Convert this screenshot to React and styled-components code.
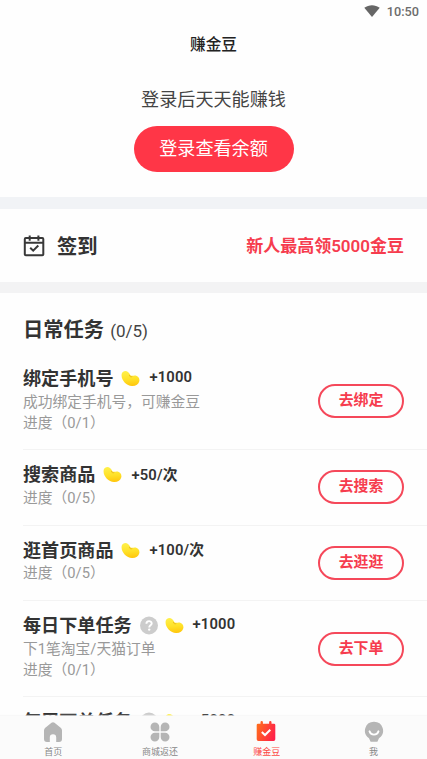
import React from 'react';
import styled, { createGlobalStyle } from 'styled-components';

const Global = createGlobalStyle`
  * { box-sizing: border-box; }
  body { margin: 0; background: #fff; overflow: hidden; }
`;

const Screen = styled.div`
  height: 759px;
  display: flex;
  flex-direction: column;
  overflow: hidden;
  background: #fefefe;
  color: #333;
  font-family: Roboto, 'Noto Sans CJK SC', sans-serif;
  white-space: nowrap;
`;

const StatusBar = styled.div`
  height: 22px;
  flex: none;
  display: flex;
  align-items: center;
  justify-content: flex-end;
  gap: 7px;
  padding: 0 8px 0 0;
  font-size: 12.7px;
  font-weight: 500;
  color: #6c6c6c;
`;

const Header = styled.header`
  height: 44px;
  flex: none;
  text-align: center;
  font-size: 15.7px;
  line-height: 45px;
  font-weight: 500;
  color: #222;
`;

const Content = styled.main`
  flex: 1;
  min-height: 0;
  overflow: hidden;
`;

const LoginPanel = styled.section`
  height: 131px;
  display: flex;
  flex-direction: column;
  align-items: center;
  padding-top: 19px;
`;

const Slogan = styled.div`
  font-size: 18.1px;
  line-height: 30px;
  color: #444;
`;

const LoginButton = styled.button`
  width: 160px;
  height: 46px;
  margin-top: 11px;
  padding: 0 0 4px;
  border: 0;
  border-radius: 23px;
  background: #ff3647;
  color: #fff;
  font: 400 18.1px Roboto, 'Noto Sans CJK SC', sans-serif;
`;

const Band = styled.div`
  height: ${(p) => p.$height}px;
  background: ${(p) => p.$color};
`;

const SignIn = styled.section`
  height: 73px;
  display: flex;
  align-items: center;
  padding: 0 23px;
`;

const SignInLabel = styled.div`
  margin: 0 0 2px 12px;
  font-size: 20.3px;
  font-weight: 700;
`;

const Promo = styled.div`
  margin: 0 0 3px auto;
  font-size: 17px;
  font-weight: 600;
  color: #f63c4e;
`;

const TaskHeading = styled.h2`
  height: 60px;
  margin: 0;
  padding: 21px 23px 0;
  font-size: 20.3px;
  line-height: 33px;
  font-weight: 700;
`;

const Count = styled.span`
  margin-left: 6px;
  font-size: 17px;
  font-weight: 400;
  color: #444;
`;

const TaskRow = styled.article`
  height: ${(p) => p.$height}px;
  margin-left: 23px;
  padding-right: 23px;
  display: flex;
  align-items: center;
  justify-content: space-between;
  border-bottom: 1px solid #f3f3f3;
`;

const TaskInfo = styled.div`
  align-self: flex-start;
  padding-top: ${(p) => (p.$tall ? 11 : 10)}px;
`;

const TaskTitle = styled.div`
  height: 26px;
  margin-bottom: 1.500px;
  display: flex;
  align-items: center;
  font-size: 18.1px;
  font-weight: 700;
`;

const Reward = styled.span`
  margin-left: 9px;
  font-size: 14.8px;
  font-weight: 600;
  letter-spacing: 0.15px;
`;

const TaskText = styled.div`
  font-size: 14.75px;
  line-height: 21px;
  color: #999;
`;

const TaskButton = styled.button`
  width: 86px;
  height: 34px;
  padding: 0 0 5px;
  border: 2px solid #f5485a;
  border-radius: 17px;
  background: transparent;
  color: #f63c4e;
  font: 700 14.9px Roboto, 'Noto Sans CJK SC', sans-serif;
`;

const BeanIcon = styled.svg`
  flex: none;
  margin: 3px 0 0 8px;
`;

const HelpIcon = styled.svg`
  flex: none;
  margin: 2px 0 0 8px;
  & + ${BeanIcon} { margin-left: 6px; }
`;

const TabBar = styled.nav`
  height: 43px;
  flex: none;
  display: grid;
  grid-template-columns: repeat(4, 1fr);
  background: #fbfbfb;
  box-shadow: 0 -1px 1px #f5f5f5aa;
`;

const Tab = styled.div`
  display: flex;
  flex-direction: column;
  align-items: center;
  padding-top: 5px;
  font-size: 9px;
  line-height: 14px;
  color: ${(p) => (p.$active ? '#fb4a45' : '#888')};
  svg { display: block; margin-bottom: 2px; }
`;

function Bean() {
  return (
    <BeanIcon width="19" height="17" viewBox="0 0 19 17">
      <defs>
        <linearGradient id="bean" x1="0.4" y1="0" x2="0.5" y2="1">
          <stop offset="0" stopColor="#fff04a" />
          <stop offset="0.55" stopColor="#ffe128" />
          <stop offset="1" stopColor="#ffc60c" />
        </linearGradient>
      </defs>
      <path
        d="M.8 3.600C1.600 1 4.800.4 7 1.900c1.600 1.100 1.700 2.700 2.700 3.500 1.200.9 3-.2 5 .2 2.700.6 4.200 3.100 3.600 5.700-.7 3.200-3.700 4.900-7.400 4.700C5.300 15.700-.7 9.400.8 3.600z"
        fill="url(#bean)"
      />
      <path d="M8.500 5.300c.2 1.300 1 2 2.400 1.400" fill="none" stroke="#e9b61a" strokeWidth="0.9" strokeLinecap="round" />
    </BeanIcon>
  );
}

function Help() {
  return (
    <HelpIcon width="19" height="19" viewBox="0 0 19 19" fill="none">
      <circle cx="9" cy="9.500" r="9" fill="#ccc" />
      <path d="M6.400 7.700c0-3.500 5.300-3.300 5.300-.3 0 1.800-2.500 2-2.500 4" stroke="#fff" strokeWidth="1.900" />
      <circle cx="9.200" cy="13.600" r="1.200" fill="#fff" />
    </HelpIcon>
  );
}

const tasks = [
  { title: '绑定手机号', reward: '+1000', lines: ['成功绑定手机号，可赚金豆', '进度（0/1）'], action: '去绑定', height: 97 },
  { title: '搜索商品', reward: '+50/次', lines: ['进度（0/5）'], action: '去搜索', height: 75.5 },
  { title: '逛首页商品', reward: '+100/次', lines: ['进度（0/5）'], action: '去逛逛', height: 75.5 },
  { title: '每日下单任务', help: true, reward: '+1000', lines: ['下1笔淘宝/天猫订单', '进度（0/1）'], action: '去下单', height: 96 },
  { title: '每周下单任务', help: true, reward: '+5000', lines: ['进度（0/1）'], action: '去下单', height: 96 },
];

export default function App() {
  return (
    <Screen>
      <Global />
      <StatusBar>
        <svg width="16" height="12" viewBox="0 0 16 12">
          <path d="M.3 2.800C5-.7 11-.7 15.700 2.800L8 12z" fill="#666" />
        </svg>
        10:50
      </StatusBar>
      <Header>赚金豆</Header>
      <Content>
        <LoginPanel>
          <Slogan>登录后天天能赚钱</Slogan>
          <LoginButton>登录查看余额</LoginButton>
        </LoginPanel>
        <Band $height={12} $color="#f1f3f6" />
        <SignIn>
          <svg width="22" height="22" viewBox="0 0 22 22" fill="none" stroke="#383838" strokeWidth="2">
            <rect x="1.800" y="3" width="18.500" height="17.300" rx="1" />
            <path d="M2 7.800h18M6.700.5v5.200M15.400.5v5.200" />
            <path d="M7.200 12.700l3 3 5.100-5.200" />
          </svg>
          <SignInLabel>签到</SignInLabel>
          <Promo>新人最高领5000金豆</Promo>
        </SignIn>
        <Band $height={11} $color="#f3f3f4" />
        <TaskHeading>
          日常任务<Count>(0/5)</Count>
        </TaskHeading>
        {tasks.map((t, i) => (
          <TaskRow key={t.title} $height={t.height}>
            <TaskInfo $tall={i === 0}>
              <TaskTitle>
                {t.title}
                {t.help && <Help />}
                <Bean />
                <Reward>{t.reward}</Reward>
              </TaskTitle>
              {t.lines.map((line) => (
                <TaskText key={line}>{line}</TaskText>
              ))}
            </TaskInfo>
            <TaskButton>{t.action}</TaskButton>
          </TaskRow>
        ))}
      </Content>
      <TabBar>
        <Tab>
          <svg width="20" height="22" viewBox="0 0 20 22">
            <path d="M8.500 1.700Q10 .6 11.500 1.700L18 7Q19 8 19 9.500V18q0 3-3 3h-2.800v-4.500a3.200 3.200 0 0 0-6.400 0V21H4q-3 0-3-3V9.500Q1 8 2 7z" fill="#b5b5b5" />
          </svg>
          首页
        </Tab>
        <Tab>
          <svg width="20" height="22" viewBox="0 0 20 22" fill="#b5b5b5">
            <path d="M9.300 10.300H5A4.400 4.400 0 1 1 9.300 5.900zM10.700 10.300V5.900a4.400 4.400 0 1 1 4.300 4.400zM9.300 11.700v4.400A4.400 4.400 0 1 1 5 11.700zM10.700 11.700H15a4.400 4.400 0 1 1-4.300 4.400z" />
          </svg>
          商城返还
        </Tab>
        <Tab $active>
          <svg width="22" height="22" viewBox="1 0 22 22" fill="none">
            <defs>
              <linearGradient id="calendar" x1="0" y1="0.3" x2="1" y2="0.7">
                <stop offset="0" stopColor="#ff6b1c" />
                <stop offset="1" stopColor="#ff1f4b" />
              </linearGradient>
            </defs>
            <g transform="translate(1 0)">
              <path d="M2 2.800h2.500V1.200a1.200 1.200 0 0 1 2.400 0v1.600h6.200V1.200a1.200 1.200 0 0 1 2.400 0v1.600H18q1.300 0 1.300 1.300v14.200q0 1.700-1.700 1.700H2.400Q.7 20 .7 18.300V4.100Q.7 2.800 2 2.800z" fill="url(#calendar)" />
              <path d="M5.800 11l3.200 3 5.300-5.200" stroke="#fff" strokeWidth="2" />
            </g>
          </svg>
          赚金豆
        </Tab>
        <Tab>
          <svg width="20" height="22" viewBox="0 0 20 22" fill="none">
            <path d="M10 .7a9 9 0 0 1 5 16.500l-1.600 3.600H6.600L5 17.200A9 9 0 0 1 10 .7z" fill="#b5b5b5" />
            <path d="M5.500 10.300c1.200 4.400 7.800 4.400 9 0" stroke="#fff" strokeWidth="1.900" strokeLinecap="round" />
          </svg>
          我
        </Tab>
      </TabBar>
    </Screen>
  );
}
